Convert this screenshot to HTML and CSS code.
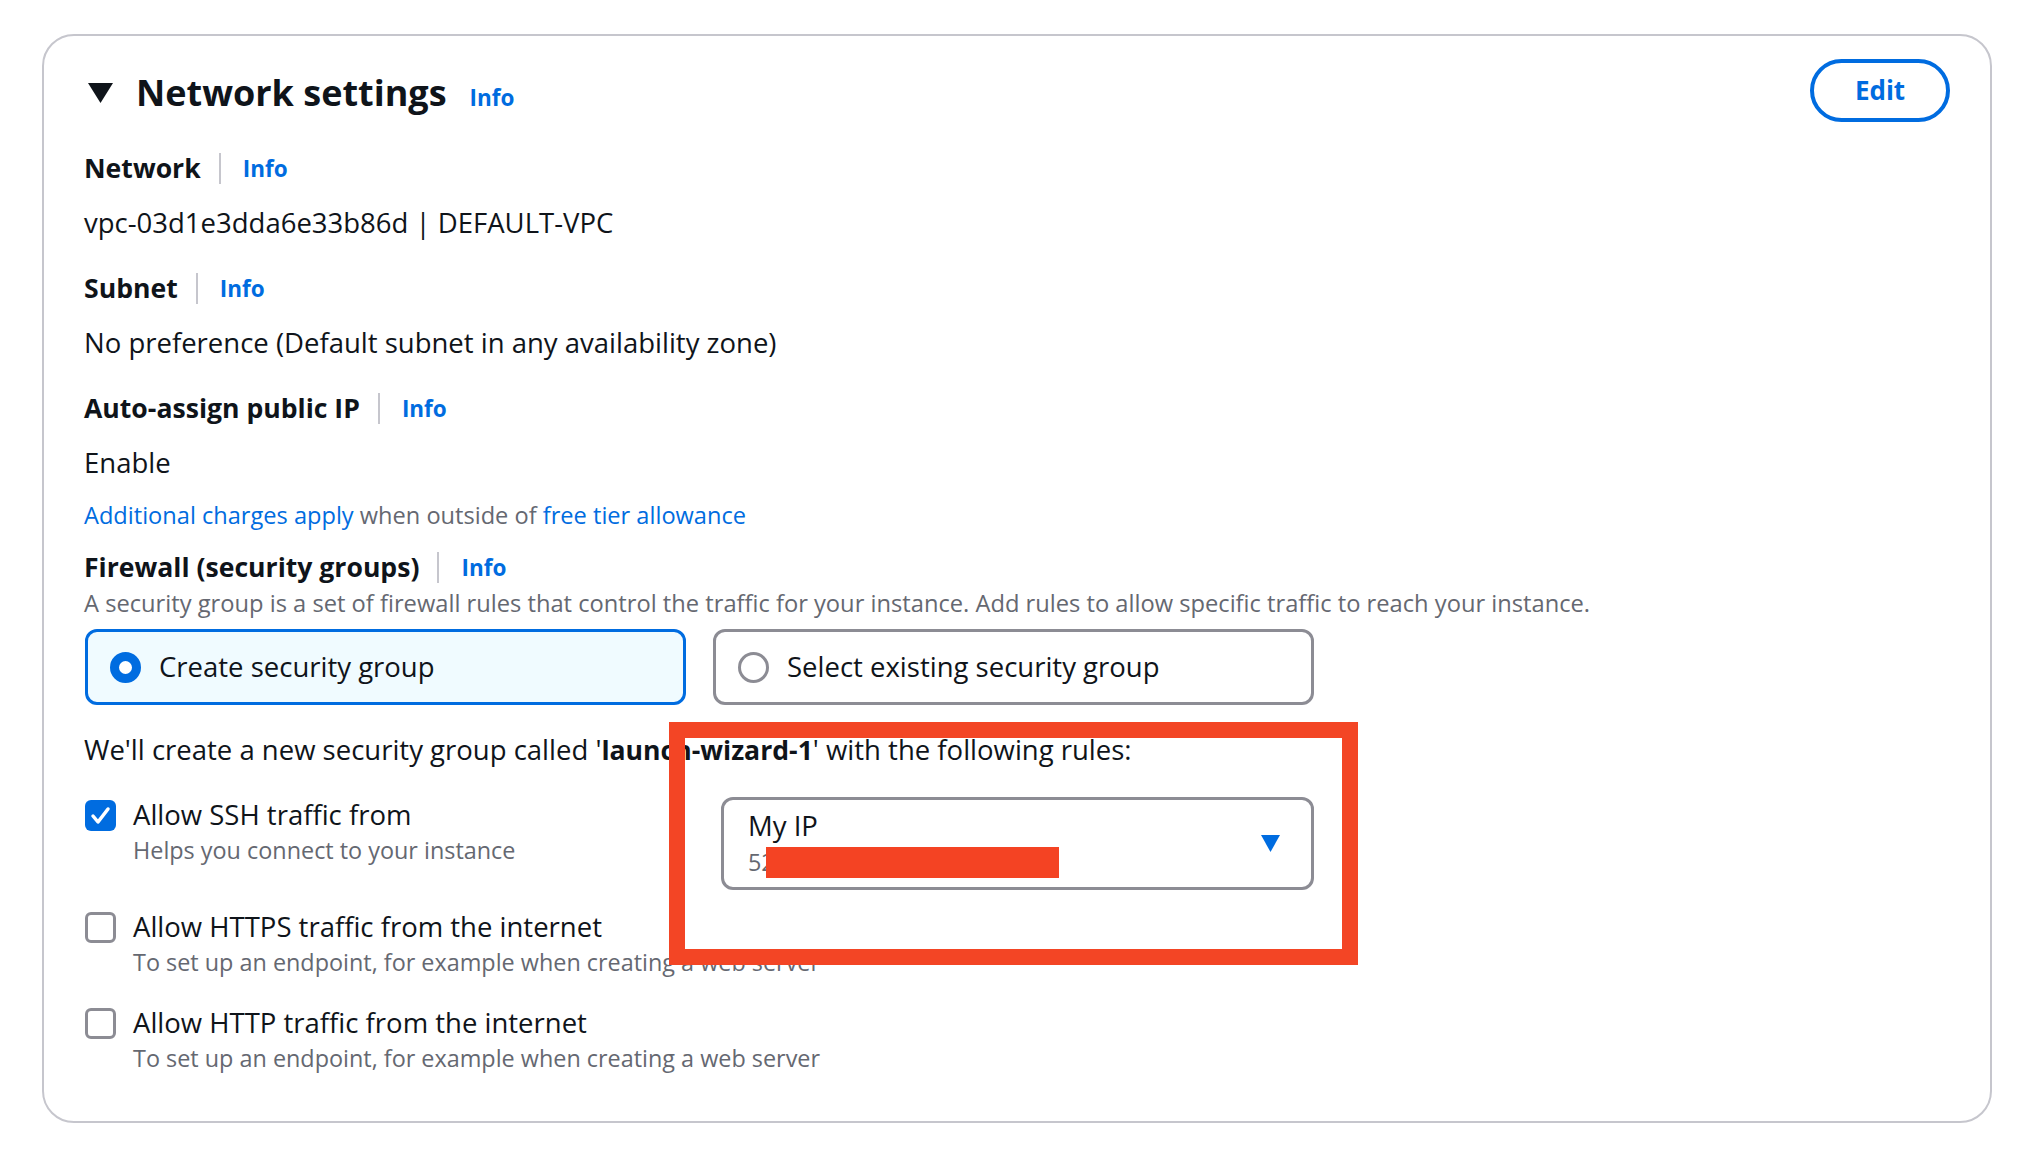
FILE: index.html
```html
<!DOCTYPE html>
<html lang="en">
<head>
<meta charset="utf-8">
<title>Network settings</title>
<link rel="stylesheet" href="styles.css">
</head>
<body>
<section class="card">
  <header class="header">
    <div class="title-wrap">
      <svg class="expand-caret" viewBox="0 0 25 20" aria-hidden="true"><polygon points="0,0 25,0 12.5,20" fill="#0f141a"/></svg>
      <h2 class="title">Network settings</h2>
      <a class="info info-title">Info</a>
    </div>
    <button class="edit-btn">Edit</button>
  </header>

  <div class="label-row first">
    <span class="label">Network</span><span class="sep"></span><a class="info">Info</a>
  </div>
  <div class="value">vpc-03d1e3dda6e33b86d | DEFAULT-VPC</div>

  <div class="label-row">
    <span class="label">Subnet</span><span class="sep"></span><a class="info">Info</a>
  </div>
  <div class="value">No preference (Default subnet in any availability zone)</div>

  <div class="label-row">
    <span class="label">Auto-assign public IP</span><span class="sep"></span><a class="info">Info</a>
  </div>
  <div class="value">Enable</div>

  <div class="charges"><a class="link">Additional charges apply</a> when outside of <a class="link">free tier allowance</a></div>

  <div class="label-row firewall">
    <span class="label">Firewall (security groups)</span><span class="sep"></span><a class="info">Info</a>
  </div>
  <div class="desc">A security group is a set of firewall rules that control the traffic for your instance. Add rules to allow specific traffic to reach your instance.</div>

  <div class="tiles">
    <div class="tile selected"><span class="radio checked"></span><span class="tile-text">Create security group</span></div>
    <div class="tile"><span class="radio"></span><span class="tile-text">Select existing security group</span></div>
  </div>

  <div class="create-note">We'll create a new security group called '<b>launch-wizard-1</b>' with the following rules:</div>

  <div class="rules">
    <div class="rule-row">
      <div class="check-item">
        <span class="checkbox checked"><svg viewBox="0 0 31 31" aria-hidden="true"><polyline points="8,16 13,22 23,9" fill="none" stroke="#fff" stroke-width="3.5" stroke-linecap="round" stroke-linejoin="round"/></svg></span>
        <div class="check-text">
          <div class="check-label">Allow SSH traffic from</div>
          <div class="check-sub">Helps you connect to your instance</div>
        </div>
      </div>
      <div class="select">
        <div class="select-text">
          <div class="select-main">My IP</div>
          <div class="select-sub">52</div>
        </div>
        <svg class="select-caret" viewBox="0 0 19 17" aria-hidden="true"><polygon points="0,0 19,0 9.5,17" fill="#006ce0"/></svg>
        <span class="redact"></span>
      </div>
    </div>
    <div class="check-item https">
      <span class="checkbox"></span>
      <div class="check-text">
        <div class="check-label">Allow HTTPS traffic from the internet</div>
        <div class="check-sub">To set up an endpoint, for example when creating a web server</div>
      </div>
    </div>
    <div class="check-item http">
      <span class="checkbox"></span>
      <div class="check-text">
        <div class="check-label">Allow HTTP traffic from the internet</div>
        <div class="check-sub">To set up an endpoint, for example when creating a web server</div>
      </div>
    </div>
  </div>

  <div class="annotation"></div>
</section>
</body>
</html>
```
FILE: styles.css
```css
html, body {
  margin: 0;
  padding: 0;
  background: #ffffff;
}

body {
  font-family: "Open Sans", Roboto, "Liberation Sans", sans-serif;
  color: #0f141a;
  font-size: 27.5px;
}

.card {
  position: relative;
  box-sizing: border-box;
  margin: 34px 0 0 42px;
  width: 1950px;
  height: 1089px;
  border: 2px solid #c6c6cd;
  border-radius: 32px;
  padding: 33px 40px 0 40px;
}

.header {
  display: flex;
  justify-content: space-between;
  align-items: center;
  height: 48px;
}

.title-wrap {
  display: flex;
  align-items: baseline;
}

.expand-caret {
  align-self: center;
  width: 25px;
  height: 20px;
  margin: 0 23px 0 4px;
}

.title {
  margin: 0;
  font-size: 36px;
  line-height: 48px;
  font-weight: 700;
}

.info {
  color: #006ce0;
  font-size: 22.5px;
  font-weight: 700;
  cursor: pointer;
}

.info-title {
  margin-left: 23px;
}

.edit-btn {
  box-sizing: border-box;
  width: 140px;
  height: 63px;
  margin-top: -6px;
  border: 4px solid #006ce0;
  border-radius: 32px;
  background: #ffffff;
  color: #006ce0;
  font-family: inherit;
  font-size: 26px;
  font-weight: 700;
}

.label-row {
  display: flex;
  align-items: center;
  height: 36px;
  margin-top: 29px;
}

.label-row.first {
  margin-top: 33px;
}

.label-row.firewall {
  margin-top: 18px;
}

.label {
  font-weight: 700;
  font-size: 26.6px;
}

.sep {
  width: 2px;
  height: 31px;
  background: #c6c6cd;
  margin: 0 22px 0 18px;
}

.value {
  line-height: 36px;
  margin-top: 19px;
}

.charges {
  margin-top: 18px;
  line-height: 32px;
  font-size: 23.6px;
  color: #656871;
}

.link {
  color: #006ce0;
}

.desc {
  margin-top: 2px;
  line-height: 32px;
  font-size: 23.7px;
  color: #656871;
}

.tiles {
  display: flex;
  gap: 27px;
  margin: 10px 0 0 1px;
}

.tile {
  box-sizing: border-box;
  display: flex;
  align-items: center;
  width: 601px;
  height: 76px;
  padding-left: 22px;
  border: 3px solid #8c8c94;
  border-radius: 12px;
  background: #ffffff;
}

.tile.selected {
  border-color: #006ce0;
  background: #f0fbff;
}

.radio {
  box-sizing: border-box;
  flex: none;
  width: 31px;
  height: 31px;
  border-radius: 50%;
  border: 3px solid #8c8c94;
  background: #ffffff;
}

.radio.checked {
  border: 9.5px solid #006ce0;
}

.tile-text {
  margin-left: 18px;
  line-height: 36px;
}

.create-note {
  margin-top: 27px;
  line-height: 36px;
}

.create-note b {
  font-size: 26.6px;
}

.rules {
  margin-top: 29px;
}

.rule-row {
  display: flex;
}

.rule-row .check-item {
  width: 637px;
}

.check-item {
  display: flex;
  align-items: flex-start;
}

.check-item.https {
  margin-top: 19px;
}

.check-item.http {
  margin-top: 26px;
}

.checkbox {
  box-sizing: border-box;
  flex: none;
  width: 31px;
  height: 31px;
  margin: 3px 17px 0 1px;
  border: 3px solid #8c8c94;
  border-radius: 6px;
  background: #ffffff;
}

.checkbox.checked {
  border: none;
  background: #006ce0;
}

.checkbox svg {
  display: block;
  width: 31px;
  height: 31px;
}

.check-label {
  line-height: 36px;
}

.check-sub {
  line-height: 34px;
  font-size: 23.4px;
  color: #656871;
}

.select {
  position: relative;
  box-sizing: border-box;
  display: flex;
  align-items: center;
  justify-content: space-between;
  width: 593px;
  height: 93px;
  padding: 0 31px 0 24px;
  border: 3px solid #8c8c94;
  border-radius: 12px;
}

.select-main {
  line-height: 36px;
}

.select-sub {
  line-height: 36px;
  font-size: 23.4px;
  color: #656871;
}

.select-caret {
  width: 19px;
  height: 17px;
}

.redact {
  position: absolute;
  left: 42px;
  top: 47px;
  width: 293px;
  height: 31px;
  background: #f44323;
}

.annotation {
  position: absolute;
  left: 625px;
  top: 686px;
  width: 689px;
  height: 243px;
  box-sizing: border-box;
  border: 16px solid #f34525;
}
```
